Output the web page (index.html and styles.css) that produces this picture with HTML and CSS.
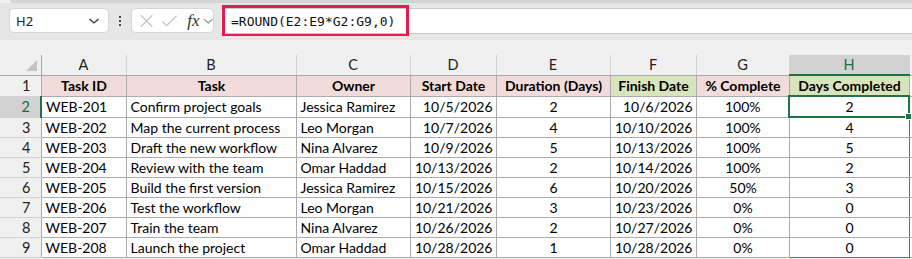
FILE: index.html
```html
<!DOCTYPE html>
<html lang="en">
<head>
    <meta charset="UTF-8">
    <title>ROUND days completed</title>
    <link rel="stylesheet" href="styles.css">
</head>
<body>
    <div class="ribbon-edge"></div>
    <div class="toolbar">
        <div class="name-box">
            <span>H2</span>
            <svg class="chev" width="12" height="8" viewBox="0 0 12 8"><path d="M1.5 2 L6 6 L10.5 2" fill="none" stroke="#333" stroke-width="1.3"/></svg>
        </div>
        <div class="dots"><i></i><i></i><i></i></div>
        <div class="fx-box">
            <svg width="16" height="16" viewBox="0 0 16 16"><path d="M2 2 L14 14 M14 2 L2 14" stroke="#c4c4c4" stroke-width="1.3"/></svg>
            <svg width="18" height="16" viewBox="0 0 18 16"><path d="M1.5 8.5 L6 13 L16.5 2.5" fill="none" stroke="#c4c4c4" stroke-width="1.3"/></svg>
            <span class="fx">fx</span>
            <svg width="11" height="8" viewBox="0 0 11 8"><path d="M1 2 L5.5 6 L10 2" fill="none" stroke="#888" stroke-width="1.2"/></svg>
        </div>
        <div class="formula">
            <span class="formula-text">=ROUND(E2:E9*G2:G9,0)</span>
            <div class="highlight"></div>
        </div>
    </div>
    <div class="sheet">
        <table class="grid">
            <colgroup>
                <col class="c-rh"><col class="c-a"><col class="c-b"><col class="c-c"><col class="c-d">
                <col class="c-e"><col class="c-f"><col class="c-g"><col class="c-h"><col class="c-i">
            </colgroup>
            <thead>
                <tr>
                    <th class="corner"><div class="tri"></div></th>
                    <th>A</th><th>B</th><th>C</th><th>D</th><th>E</th><th>F</th><th>G</th>
                    <th class="sel-col">H</th><th></th>
                </tr>
            </thead>
            <tbody id="rows">
                <tr class="head">
                    <th class="rh">1</th>
                    <td class="pink">Task ID</td>
                    <td class="pink">Task</td>
                    <td class="pink">Owner</td>
                    <td class="pink">Start Date</td>
                    <td class="pink">Duration (Days)</td>
                    <td class="green">Finish Date</td>
                    <td class="pink">% Complete</td>
                    <td class="green">Days Completed</td>
                    <td class="blank"></td>
                </tr>
            </tbody>
        </table>
    </div>
    <script>
        const data = [
            ['WEB-201', 'Confirm project goals', 'Jessica Ramirez', '10/5/2026', 2, '10/6/2026', '100%', 2],
            ['WEB-202', 'Map the current process', 'Leo Morgan', '10/7/2026', 4, '10/10/2026', '100%', 4],
            ['WEB-203', 'Draft the new workflow', 'Nina Alvarez', '10/9/2026', 5, '10/13/2026', '100%', 5],
            ['WEB-204', 'Review with the team', 'Omar Haddad', '10/13/2026', 2, '10/14/2026', '100%', 2],
            ['WEB-205', 'Build the first version', 'Jessica Ramirez', '10/15/2026', 6, '10/20/2026', '50%', 3],
            ['WEB-206', 'Test the workflow', 'Leo Morgan', '10/21/2026', 3, '10/23/2026', '0%', 0],
            ['WEB-207', 'Train the team', 'Nina Alvarez', '10/26/2026', 2, '10/27/2026', '0%', 0],
            ['WEB-208', 'Launch the project', 'Omar Haddad', '10/28/2026', 1, '10/28/2026', '0%', 0]
        ];
        const body = document.getElementById('rows');
        data.forEach((r, i) => {
            const tr = document.createElement('tr');
            const n = i + 2;
            let cls = 'rng';
            if (n === 2) cls += ' active';
            if (n === 9) cls += ' rng-end';
            tr.innerHTML = `
                <th class="rh${n === 2 ? ' sel-row' : ''}">${n}</th>
                <td>${r[0]}</td>
                <td>${r[1]}</td>
                <td>${r[2]}</td>
                <td class="right">${r[3]}</td>
                <td class="center">${r[4]}</td>
                <td class="right">${r[5]}</td>
                <td class="center">${r[6]}</td>
                <td class="center ${cls}">${r[7]}${n === 2 ? '<span class="handle"></span>' : ''}</td>
                <td class="blank"></td>
            `;
            body.appendChild(tr);
        });
    </script>
</body>
</html>
```

FILE: styles.css
```css
body {
    margin: 0;
    padding: 0;
    width: 912px;
    height: 259px;
    overflow: hidden;
    background: #f0f0f0;
    font-family: Lato, "Noto Sans", sans-serif;
}

.ribbon-edge {
    height: 3px;
    margin-left: 10px;
    background: #d4d4d4;
    border-bottom-left-radius: 4px;
}

.toolbar {
    height: 37px;
    background: #e6e6e6;
    display: flex;
    align-items: flex-start;
    padding-top: 5px;
    box-sizing: border-box;
}

.name-box {
    width: 100px;
    height: 25px;
    margin-left: 9px;
    box-sizing: border-box;
    background: #fff;
    border: 1px solid #d6d6d6;
    border-radius: 5px;
    display: flex;
    align-items: center;
    justify-content: space-between;
    padding: 0 8px 0 6px;
    font-family: "Noto Sans", sans-serif;
    font-size: 13px;
    color: #222;
}

.dots {
    width: 22px;
    height: 25px;
    display: flex;
    flex-direction: column;
    align-items: center;
    justify-content: center;
    gap: 2px;
}
.dots i {
    width: 2px;
    height: 2px;
    background: #444;
}

.fx-box {
    width: 83px;
    height: 25px;
    box-sizing: border-box;
    background: #fff;
    border: 1px solid #d6d6d6;
    border-radius: 5px;
    display: flex;
    align-items: center;
    gap: 7px;
    padding-left: 7px;
}
.fx {
    font-family: "Liberation Serif", serif;
    font-style: italic;
    font-size: 17px;
    color: #333;
    margin-left: 2px;
    margin-right: -4px;
    line-height: 1;
}

.formula {
    position: relative;
    flex: 1;
    height: 26px;
    margin-left: 7px;
    box-sizing: border-box;
    background: #fff;
    border-top: 1px solid #c8c8c8;
    border-bottom: 1px solid #c8c8c8;
    display: flex;
    align-items: center;
    padding-left: 10px;
}
.formula-text {
    font-family: "DejaVu Sans Mono", monospace;
    font-size: 13px;
    color: #111;
}
.highlight {
    position: absolute;
    left: 1px;
    top: -4px;
    width: 187px;
    height: 31px;
    box-sizing: border-box;
    border: 3px solid #e31b4f;
    border-bottom-width: 2px;
}

.sheet {
    padding-top: 15px;
}

.grid {
    table-layout: fixed;
    border-collapse: collapse;
    width: 912px;
    font-size: 14px;
    color: #000;
}
.c-rh { width: 41px; }
.c-a { width: 85px; }
.c-b { width: 170px; }
.c-c { width: 114px; }
.c-d { width: 86px; }
.c-e { width: 114px; }
.c-f { width: 86px; }
.c-g { width: 93px; }
.c-h { width: 120px; }
.c-i { width: 3px; }

thead th {
    height: 19px;
    padding: 0;
    font-weight: normal;
    font-size: 14.5px;
    color: #222;
    background: #f0f0f0;
    border-left: 1px solid #d2d2d2;
    border-bottom: 1px solid #ababab;
    line-height: 18px;
}
thead th.corner {
    border-left: none;
    border-right: 1px solid #ababab;
    position: relative;
}
.tri {
    position: absolute;
    right: 4px;
    bottom: 4px;
    width: 0;
    height: 0;
    border-left: 11px solid transparent;
    border-bottom: 11px solid #c4c4c4;
}
thead th.sel-col {
    background: #d2d2d2;
    color: #1d6b3e;
    border-bottom: 2px solid #217346;
}

td, th.rh {
    height: 19px;
    padding: 0 3px 0 4px;
    line-height: 19px;
    border: 1px solid #ababab;
    white-space: nowrap;
    overflow: hidden;
}
th.rh {
    font-weight: normal;
    font-size: 14.5px;
    text-align: right;
    padding-right: 10px;
    background: #f0f0f0;
    color: #222;
    border-left: none;
    border-top-color: #d2d2d2;
    border-bottom-color: #d2d2d2;
}
th.sel-row {
    background: #d2d2d2;
    color: #1d6b3e;
    border-right: 2px solid #217346;
}

.head td {
    font-weight: bold;
    font-size: 14px;
    text-align: center;
}
.pink { background: #f2dcdb; }
.green { background: #d8e4bc; }

.right { text-align: right; }
.center { text-align: center; }

td.blank {
    padding: 0;
    border-right: none;
    background: #fff;
}
td { background: #fff; }

td.rng {
    border-left: 1px solid #4472c4;
    border-right: 1px solid #4472c4;
}
td.rng-end {
    border-bottom: 1px solid #4472c4;
}
td.active {
    border: 2px solid #217346;
    position: relative;
    overflow: visible;
}
.handle {
    position: absolute;
    right: -4px;
    bottom: -4px;
    width: 5px;
    height: 5px;
    background: #217346;
    border: 1px solid #fff;
}
```
